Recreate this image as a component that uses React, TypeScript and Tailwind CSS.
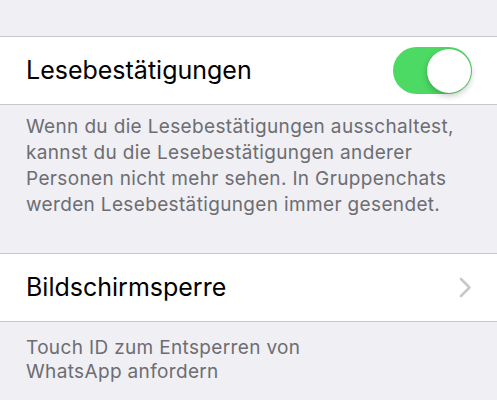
import React from "react";

function Toggle() {
  return (
    <div className="relative h-[47px] w-[79px] rounded-full bg-[#4cd964]">
      <div className="absolute right-[1px] top-[1.5px] h-[44px] w-[44px] rounded-full bg-white shadow-[0_3px_6px_rgba(0,0,0,0.22),0_0_1px_rgba(0,0,0,0.15)]" />
    </div>
  );
}

function Chevron() {
  return (
    <svg width="13" height="21" viewBox="0 0 13 21" fill="none">
      <path d="M2 2l8.5 8.5L2 19" stroke="#c7c7cc" strokeWidth="2.6" strokeLinecap="round" strokeLinejoin="round" />
    </svg>
  );
}

export default function App() {
  return (
    <div className="h-[400px] w-[497px] overflow-hidden bg-[#efeff4] font-['Inter',sans-serif]">
      <div className="h-[36px]" />
      <div className="flex h-[69px] items-center justify-between border-y border-[#c8c7cc] bg-white pl-[26px] pr-[25px]">
        <span className="text-[25px] text-black">Lesebestätigungen</span>
        <Toggle />
      </div>
      <div className="px-[26px] pt-[9px] pb-[35px] text-[19px] leading-[26px] tracking-[0.35px] text-[#6d6d72]">
        Wenn du die Lesebestätigungen ausschaltest, kannst du die Lesebestätigungen anderer Personen nicht mehr sehen. In Gruppenchats werden Lesebestätigungen immer gesendet.
      </div>
      <div className="flex h-[69px] items-center justify-between border-y border-[#c8c7cc] bg-white pl-[26px] pr-[25px]">
        <span className="text-[25px] text-black">Bildschirmsperre</span>
        <Chevron />
      </div>
      <div className="px-[26px] pt-[14px] text-[19px] leading-[24px] tracking-[0.35px] text-[#6d6d72]">
        Touch ID zum Entsperren von
        <br />
        WhatsApp anfordern
      </div>
    </div>
  );
}
